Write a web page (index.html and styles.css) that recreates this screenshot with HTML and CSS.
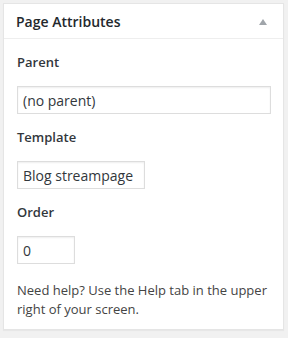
FILE: index.html
```html
<!DOCTYPE html>
<html lang="en">
<head>
  <meta charset="UTF-8" />
  <title>Page Attributes</title>
  <link rel="stylesheet" href="styles.css">
</head>
<body>
  <div class="postbox">
    <div class="postbox-header">
      <h2 class="hndle">Page Attributes</h2>
      <svg class="toggle" width="8" height="6" viewBox="0 0 8 6"><path d="M4 0 L8 6 L0 6 Z" fill="#a0a5aa"/></svg>
    </div>
    <div class="inside">
      <p class="label">Parent</p>
      <input class="field field-wide" type="text" value="(no parent)" readonly />
      <p class="label">Template</p>
      <select class="field field-select">
        <option>Blog streampage</option>
      </select>
      <p class="label">Order</p>
      <input class="field field-small" type="text" value="0" readonly />
      <p class="help">Need help? Use the Help tab in the upper right of your screen.</p>
    </div>
  </div>
</body>
</html>
```

FILE: styles.css
```css
* {
  box-sizing: border-box;
}

body {
  margin: 0;
  padding: 3px;
  background: #f1f1f1;
  font-family: 'Open Sans', sans-serif;
  color: #444;
}

.postbox {
  width: 281px;
  background: #fff;
  border: 1px solid #e5e5e5;
  box-shadow: 0 1px 1px rgba(0, 0, 0, 0.04);
}

.postbox-header {
  display: flex;
  align-items: center;
  justify-content: space-between;
  border-bottom: 1px solid #eee;
  padding: 8px 16px 7px 12px;
}

.hndle {
  margin: 0;
  font-size: 14px;
  font-weight: 600;
  line-height: 19px;
  color: #23282d;
}

.toggle {
  display: block;
}

.inside {
  padding: 0 12px 10px 13px;
  display: flex;
  flex-direction: column;
  align-items: flex-start;
}

.label {
  margin: 14px 0;
  font-size: 13px;
  font-weight: 600;
  line-height: 19px;
  color: #32373c;
}

.field {
  height: 28px;
  margin: 0;
  padding: 3px 5px;
  border: 1px solid #ddd;
  border-radius: 0;
  box-shadow: inset 0 1px 2px rgba(0, 0, 0, 0.07);
  background: #fff;
  font-family: 'Open Sans', sans-serif;
  font-size: 14px;
  color: #32373c;
  outline: none;
}

.field-wide {
  width: 254px;
}

.field-select {
  width: 128px;
  appearance: none;
  -webkit-appearance: none;
}

.field-small {
  width: 58px;
}

.help {
  margin: 17px 0 0;
  font-size: 13px;
  line-height: 19px;
}
```
